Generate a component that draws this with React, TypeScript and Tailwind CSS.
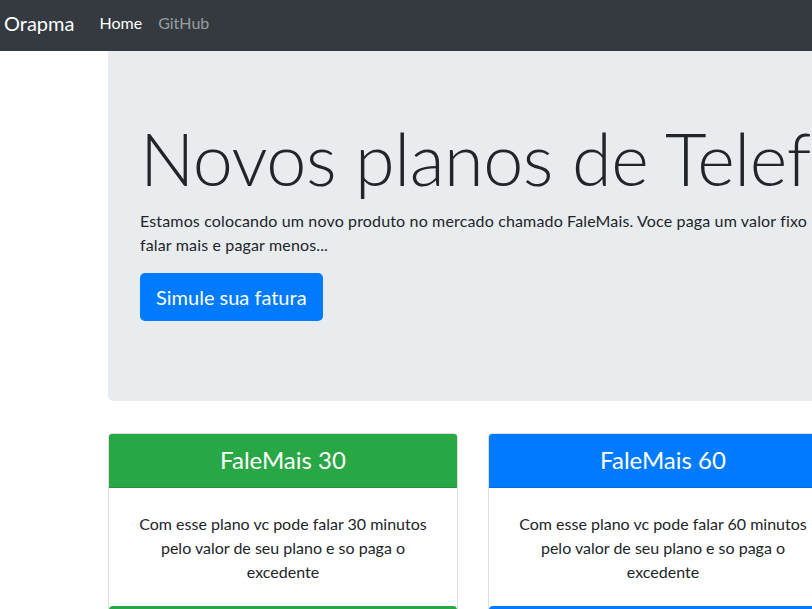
const font = { fontFamily: "Lato, 'Noto Sans', sans-serif" };

const plans = [
  { title: "FaleMais 30", mins: 30, color: "bg-[#28a745]" },
  { title: "FaleMais 60", mins: 60, color: "bg-[#007bff]" },
  { title: "FaleMais 120", mins: 120, color: "bg-[#dc3545]" },
];

export default function App() {
  return (
    <div className="w-full h-[609px] overflow-hidden bg-white text-[#212529]" style={font}>
      {/* Navbar */}
      <nav className="h-[51px] bg-[#343a40] flex items-center pl-[4px] pb-[6px] w-[1200px]">
        <a className="text-[20px] text-white mr-[25px]">Orapma</a>
        <a className="text-[16px] text-white mr-[16px]">Home</a>
        <a className="text-[16px] text-white/50">GitHub</a>
      </nav>

      <div className="ml-[108px] w-[1100px]">
        {/* Jumbotron */}
        <div className="bg-[#e9ecef] rounded-b-[5px] px-8 pt-16 pb-16 mb-8">
          <h1 className="text-[72px] font-light leading-[1.2] mb-2 tracking-[-0.5px] whitespace-nowrap">
            Novos planos de Telefonia
          </h1>
          <p className="text-[16px] leading-6 mb-4 tracking-[0.15px] whitespace-nowrap">
            Estamos colocando um novo produto no mercado chamado FaleMais. Voce paga um valor fixo
            <br />
            falar mais e pagar menos...
          </p>
          <p className="mb-4">
            <button className="bg-[#007bff] text-white text-[20px] leading-[1.5] px-4 py-[9px] rounded-[5px]">
              Simule sua fatura
            </button>
          </p>
        </div>

        {/* Cards */}
        <div className="flex gap-[30px]">
          {plans.map((p) => (
            <div
              key={p.title}
              className="w-[350px] shrink-0 border border-black/[.125] rounded-[4px] overflow-hidden"
            >
              <div className={`${p.color} text-white text-center text-[24px] leading-[1.2] py-3 border-b border-black/[.125]`}>
                {p.title}
              </div>
              <div className="px-5 pt-6 pb-[22px] text-center text-[16px] leading-6">
                Com esse plano vc pode falar {p.mins} minutos pelo valor de seu plano e so paga o
                excedente
              </div>
              <div className={`${p.color} h-10 rounded-t-[4px]`} />
            </div>
          ))}
        </div>
      </div>
    </div>
  );
}
